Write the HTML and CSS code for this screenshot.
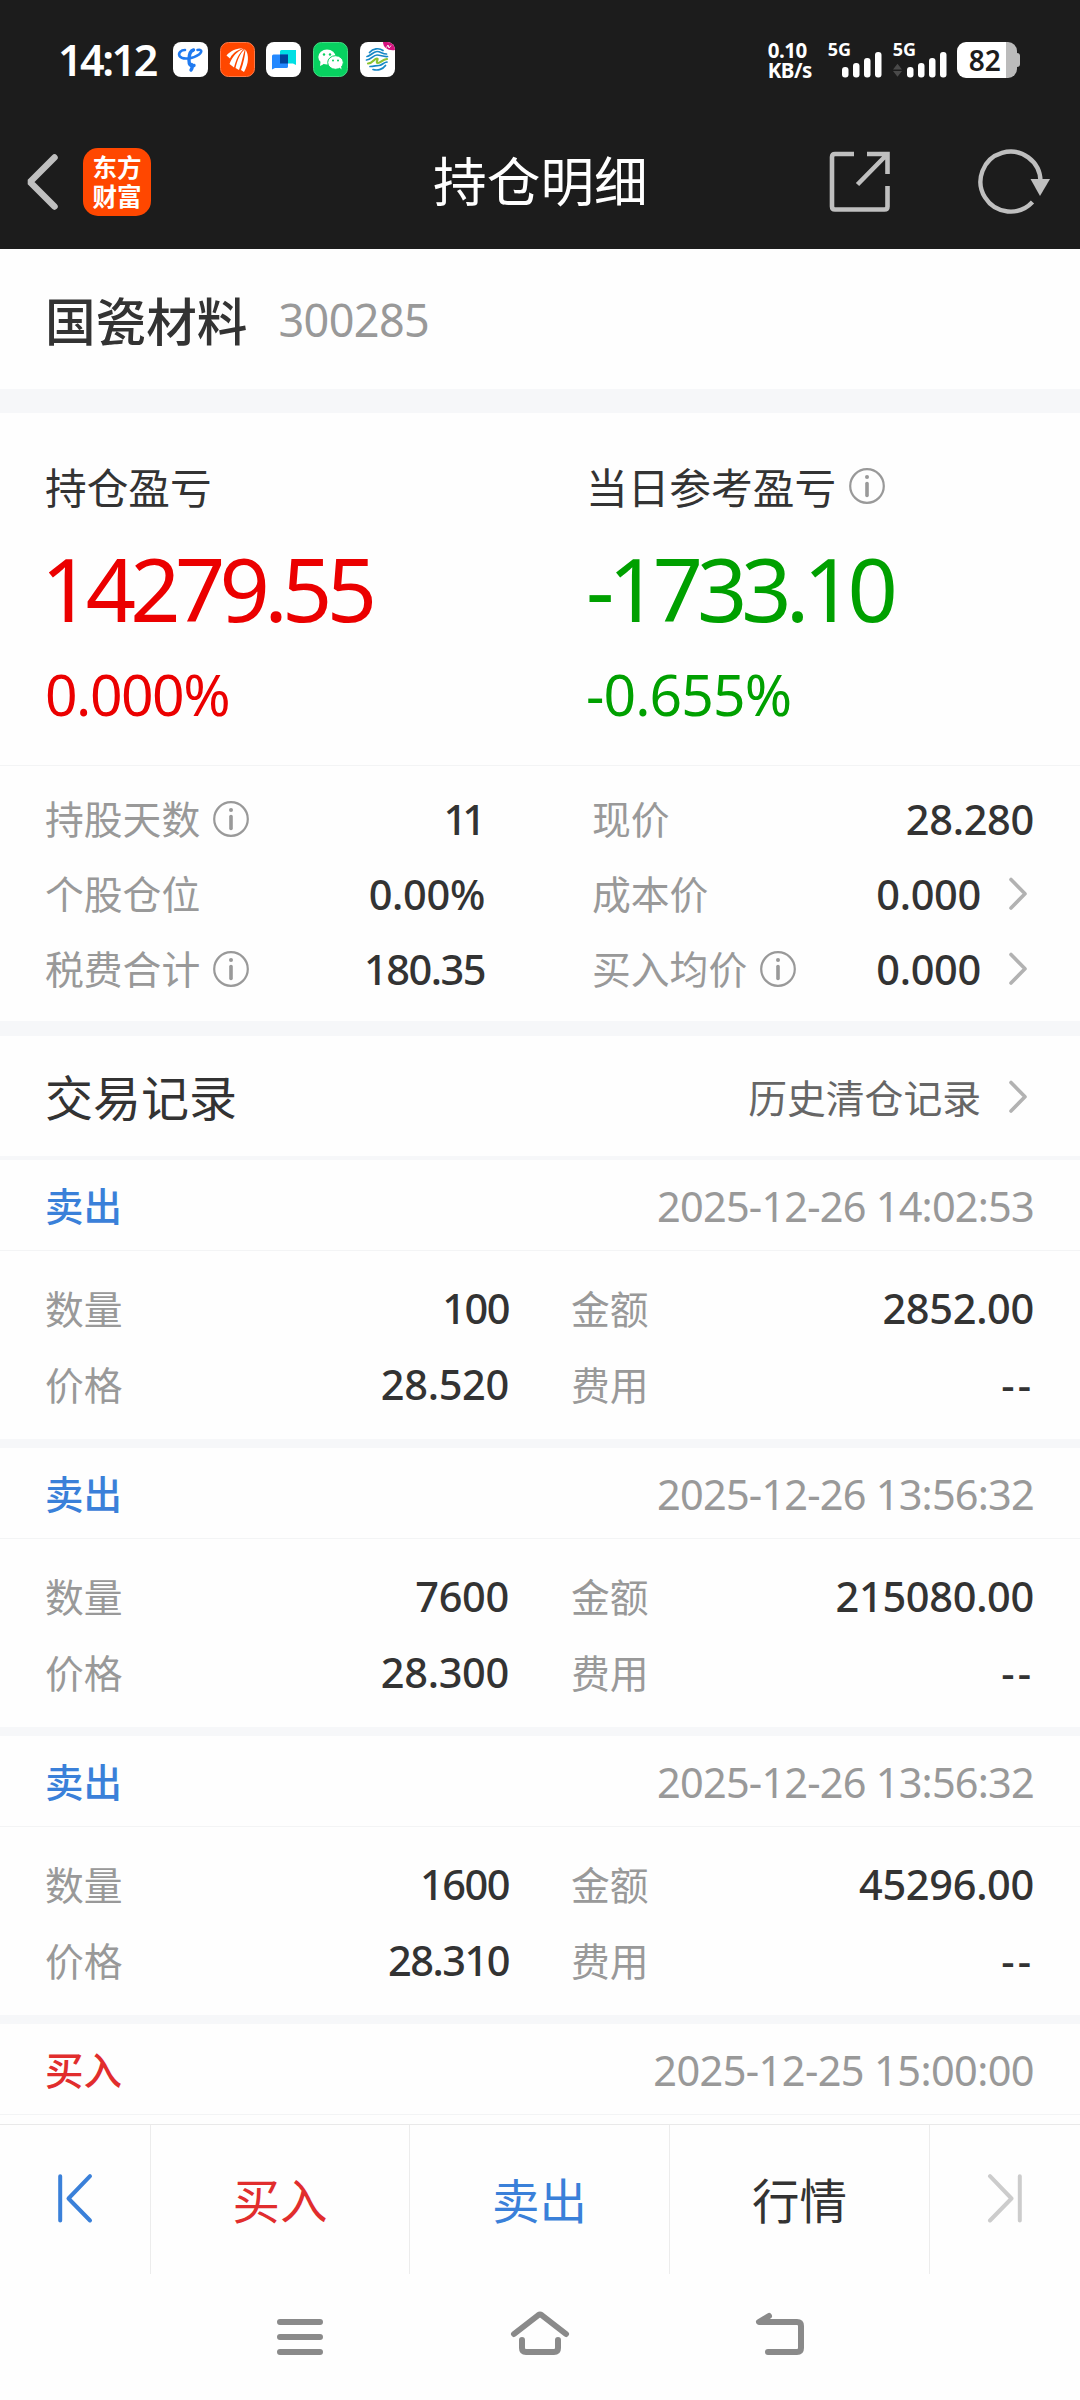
FILE: index.html
```html
<!DOCTYPE html>
<html lang="zh-CN">
<head>
    <meta charset="UTF-8">
    <meta name="viewport" content="width=device-width, initial-scale=1.0">
    <title>持仓明细</title>
    <link rel="stylesheet" href="styles.css">
</head>
<body>
    <svg class="defs">
        <symbol id="info" viewBox="0 0 36 36">
            <circle cx="18" cy="18" r="16.8" fill="none" stroke="#999" stroke-width="2.2"/>
            <circle cx="18" cy="9" r="2" fill="#999"/>
            <path d="M18 15.5V27.5" stroke="#999" stroke-width="3.6" stroke-linecap="round"/>
        </symbol>
        <symbol id="arrow" viewBox="0 0 20 34">
            <path d="M3 2.5L17 16.8L3 31" fill="none" stroke="#b2b2b2" stroke-width="3.6" stroke-linecap="round" stroke-linejoin="round"/>
        </symbol>
        <symbol id="bars" viewBox="0 0 40 26">
            <g fill="#fff">
                <rect x="0" y="15" width="6.5" height="10.5" rx="3"/>
                <rect x="11" y="11" width="6.5" height="14.5" rx="3"/>
                <rect x="22" y="6" width="6.5" height="19.5" rx="3"/>
                <rect x="33" y="0" width="6.5" height="25.5" rx="3"/>
            </g>
        </symbol>
    </svg>

    <header>
        <div class="status">
            <span class="time">14:12</span>
            <div class="apps">
                <svg viewBox="0 0 35 35">
                    <rect width="35" height="35" rx="8" fill="#fff"/>
                    <path d="M12 8C8 8 5 11 6.5 14C9 18 20 17 26 12.500C30 9 28 7 24.500 8" fill="none" stroke="#1f7af0" stroke-width="2.6" stroke-linecap="round"/>
                    <path d="M20.500 8C16.500 9 16 13 16 18C16 22.500 17 24.500 21 23.500M18.500 22.500Q20 26 18 28" fill="none" stroke="#1f7af0" stroke-width="3.4" stroke-linecap="round"/>
                </svg>
                <svg viewBox="0 0 35 35">
                    <rect x=".5" y=".5" width="34" height="34" rx="8" fill="#ff4700" stroke="#ff7a48"/>
                    <path d="M6.500 13.500C11 8 17 6 23 6.500C16 8.500 12 12 10 16.500Z" fill="#fff"/>
                    <path d="M9.500 22C12 15 17 9 24 6.800C19 11 16 18 14 25.500Z" fill="#fff"/>
                    <path d="M15.500 26C17.500 18 20 11 25 7C23 13 22 20 19 28Z" fill="#fff"/>
                    <path d="M21 28C23.500 21 25 14 25.500 7.500C29 13 29 21 24 30Z" fill="#fff"/>
                </svg>
                <svg viewBox="0 0 35 35">
                    <rect width="35" height="35" rx="8" fill="#fff"/>
                    <path d="M14 9.500Q14 8 15.500 8H30V23L27 21.500H14Z" fill="#00dfe4"/>
                    <path d="M6 14Q6 12.500 7.500 12.500H22V24.500Q22 26 20.500 26H9L6 27.500Z" fill="#2489ff"/>
                    <path d="M14 12.500H22V21.500H14Z" fill="#00439b"/>
                </svg>
                <svg viewBox="0 0 35 35">
                    <rect x=".5" y=".5" width="34" height="34" rx="8" fill="#07d160" stroke="#42dc83"/>
                    <path d="M7 24L7.500 20H12L10 22.500Z" fill="#fff"/>
                    <ellipse cx="14" cy="15" rx="8.700" ry="7.500" fill="#fff"/>
                    <ellipse cx="22.500" cy="20.500" rx="7.800" ry="6.800" fill="#fff" stroke="#07d160" stroke-width="1"/>
                    <path d="M26 25L28.500 27.500L28 23.500Z" fill="#fff"/>
                    <g fill="#07d160">
                        <circle cx="11" cy="12.500" r="1.200"/><circle cx="17" cy="12.500" r="1.200"/>
                        <circle cx="20" cy="18.500" r="1"/><circle cx="25" cy="18.500" r="1"/>
                    </g>
                </svg>
                <svg viewBox="0 0 35 35">
                    <rect width="35" height="35" rx="8" fill="#fff"/>
                    <path d="M23 0H27A8 8 0 0 1 35 8C29 9 23 6 23 0Z" fill="#d6127f"/>
                    <path d="M26.500 5.500L28 3L29 6L31 3.500" fill="none" stroke="#fff" stroke-width=".9"/>
                    <g fill="none" stroke-width="1.700" stroke-linecap="round">
                        <path d="M9.500 10.500C13 6.500 19 5.500 23 8.500" stroke="#1587c6"/>
                        <path d="M7 14.500C10 14.500 13 9.500 17 9.500C21 9.500 22 12 26.500 12" stroke="#1587c6"/>
                        <path d="M6.500 18C11 18 13 13 17 13C21 13 23 15 27.500 14.500" stroke="#1587c6"/>
                        <path d="M8 21.500C13 21.500 14 16.500 17 16.500C19 16.500 15 21 18 21C21 21 22 17.500 27 17" stroke="#8bc334" stroke-width="2.200"/>
                        <path d="M10 24.500C14 24.500 16 23.500 19 23.500C22 23.500 23 20.500 27 20" stroke="#1587c6"/>
                        <path d="M13 27.500C18 29 23 27 25.500 23.500" stroke="#1587c6"/>
                    </g>
                </svg>
            </div>
            <div class="speed"><span>0.10</span><span>KB/s</span></div>
            <div class="signal">
                <span class="net">5G</span>
                <svg class="bars"><use href="#bars"/></svg>
            </div>
            <div class="signal">
                <span class="net">5G</span>
                <svg class="updown" viewBox="0 0 10 15"><path d="M0 6.500L5 0L10 6.500ZM0 8H10L5 14.500Z" fill="#4a4a4a"/></svg>
                <svg class="bars"><use href="#bars"/></svg>
            </div>
            <div class="battery">82</div>
        </div>

        <div class="navbar">
            <svg class="back" viewBox="0 0 32 56"><path d="M28.500 3.500L4 28L28.500 52.500" fill="none" stroke="#bfbfbf" stroke-width="6.500" stroke-linecap="round" stroke-linejoin="bevel"/></svg>
            <div class="logo"><span>东方</span><span>财富</span></div>
            <h1>持仓明细</h1>
            <svg class="share" viewBox="0 0 62 62">
                <path d="M25 3H6Q3 3 3 6V55.500Q3 58.500 6 58.500H55.500Q58.500 58.500 58.500 55.500V35M38 3H58.500V23M57 4.500L28.500 33.500" fill="none" stroke="#bfbfbf" stroke-width="4.600"/>
            </svg>
            <svg class="reload" viewBox="0 0 72 64">
                <path d="M61.500 31A30 30 0 1 0 53.500 52" fill="none" stroke="#bfbfbf" stroke-width="4.400"/>
                <path d="M51.500 29H71L61 46Z" fill="#bfbfbf"/>
            </svg>
        </div>
    </header>

    <main>
        <section class="stock">
            <span class="name">国瓷材料</span>
            <span class="code">300285</span>
        </section>

        <section class="profit">
            <div class="red">
                <h2>持仓盈亏</h2>
                <p class="amount total">14279.55</p>
                <p class="rate">0.000%</p>
            </div>
            <div class="green">
                <h2>当日参考盈亏<svg class="info"><use href="#info"/></svg></h2>
                <p class="amount">-1733.10</p>
                <p class="rate day">-0.655%</p>
            </div>
        </section>

        <section class="detail">
            <div class="item"><label>持股天数</label><svg class="info"><use href="#info"/></svg><b class="ones">11</b></div>
            <div class="item"><label>现价</label><b>28.280</b></div>
            <div class="item"><label>个股仓位</label><b>0.00%</b></div>
            <div class="item"><label>成本价</label><b>0.000</b><svg class="arrow"><use href="#arrow"/></svg></div>
            <div class="item"><label>税费合计</label><svg class="info"><use href="#info"/></svg><b class="tight">180.35</b></div>
            <div class="item"><label>买入均价</label><svg class="info"><use href="#info"/></svg><b>0.000</b><svg class="arrow"><use href="#arrow"/></svg></div>
        </section>

        <section class="history">
            <h3>交易记录</h3>
            <a>历史清仓记录</a>
            <svg class="arrow"><use href="#arrow"/></svg>
        </section>

        <section class="record">
            <div class="record-head"><span class="sell">卖出</span><time>2025-12-26 14:02:53</time></div>
            <div class="record-body">
                <div class="item"><label>数量</label><b class="tight">100</b></div>
                <div class="item"><label>金额</label><b>2852.00</b></div>
                <div class="item"><label>价格</label><b>28.520</b></div>
                <div class="item"><label>费用</label><b class="none">--</b></div>
            </div>
        </section>
        <section class="record">
            <div class="record-head"><span class="sell">卖出</span><time>2025-12-26 13:56:32</time></div>
            <div class="record-body">
                <div class="item"><label>数量</label><b>7600</b></div>
                <div class="item"><label>金额</label><b>215080.00</b></div>
                <div class="item"><label>价格</label><b>28.300</b></div>
                <div class="item"><label>费用</label><b class="none">--</b></div>
            </div>
        </section>
        <section class="record">
            <div class="record-head"><span class="sell">卖出</span><time>2025-12-26 13:56:32</time></div>
            <div class="record-body">
                <div class="item"><label>数量</label><b class="tight">1600</b></div>
                <div class="item"><label>金额</label><b>45296.00</b></div>
                <div class="item"><label>价格</label><b class="tight">28.310</b></div>
                <div class="item"><label>费用</label><b class="none">--</b></div>
            </div>
        </section>
        <section class="record last">
            <div class="record-head"><span class="buy">买入</span><time class="wide">2025-12-25 15:00:00</time></div>
        </section>
    </main>

    <footer>
        <nav class="tabs">
            <div><svg viewBox="0 0 34 49"><path d="M2.200 2.200V46.500M32 2.200L10.500 24.500L32 46.500" fill="none" stroke="#3a80d9" stroke-width="4" stroke-linecap="round" stroke-linejoin="round"/></svg></div>
            <div class="buy">买入</div>
            <div class="sell">卖出</div>
            <div>行情</div>
            <div><svg viewBox="0 0 34 49"><path d="M31.800 2.200V46.500M2 2.200L23.500 24.500L2 46.500" fill="none" stroke="#ccc" stroke-width="4" stroke-linecap="round" stroke-linejoin="round"/></svg></div>
        </nav>
        <div class="system">
            <svg viewBox="0 0 60 50"><path d="M10 12H50M10 27H50M10 42H50"/></svg>
            <svg viewBox="0 0 60 50"><path d="M4 24L28.500 5Q30 4 31.500 5L56 24M12 30V38Q12 42 16 42H44Q48 42 48 38V30"/></svg>
            <svg viewBox="0 0 60 50"><path d="M19 6L9 12H47Q51 12 51 16V38Q51 42 47 42H18"/></svg>
        </div>
    </footer>
</body>
</html>
```
FILE: styles.css
```css
* {
    box-sizing: border-box;
    margin: 0;
    padding: 0;
}

body {
    width: 1080px;
    height: 2400px;
    overflow: hidden;
    display: flex;
    flex-direction: column;
    background-color: #fefefe;
    color: #333;
    font-family: "Noto Sans", "Noto Sans CJK SC", sans-serif;
}

.defs {
    display: none;
}

svg {
    display: block;
    flex-shrink: 0;
    overflow: visible;
}

header {
    height: 249px;
    background-color: #1c1c1c;
    color: #fff;
}

/* status bar */
.status {
    display: flex;
    align-items: center;
    height: 119px;
    padding-left: 58px;
}

.time {
    width: 115px;
    font-size: 43px;
    font-weight: 600;
    line-height: 60px;
    letter-spacing: -2.5px;
}

.apps {
    display: flex;
    gap: 11.7px;
}

.apps svg {
    width: 35px;
    height: 35px;
}

.speed {
    display: flex;
    flex-direction: column;
    width: 60px;
    margin-left: 373px;
    font-size: 20.5px;
    font-weight: 700;
    line-height: 20px;
    letter-spacing: -0.5px;
    white-space: nowrap;
}

.signal {
    display: flex;
    width: 65px;
    height: 36px;
    align-items: flex-end;
}

.signal .net {
    width: 14px;
    align-self: flex-start;
    font-size: 18px;
    font-weight: 700;
    line-height: 15px;
}

.signal .bars {
    width: 40px;
    height: 26px;
}

.signal .updown {
    width: 9px;
    height: 15px;
    margin: 0 5px 0 -14px;
}

.battery {
    position: relative;
    width: 60px;
    height: 36px;
    border-radius: 9px;
    background: linear-gradient(to right, #fff 49px, #bbb 49px);
    color: #1c1c1c;
    font-size: 28px;
    font-weight: 600;
    line-height: 36px;
    padding-left: 12px;
    margin-left: -1px;
}

.battery::after {
    content: "";
    position: absolute;
    right: -3px;
    top: 11px;
    width: 4px;
    height: 14px;
    border-radius: 0 3px 3px 0;
    background-color: #bbb;
}

.navbar {
    display: flex;
    align-items: center;
    height: 125px;
    padding-left: 26px;
}

.back {
    width: 32px;
    height: 56px;
}

.logo {
    display: flex;
    flex-direction: column;
    align-items: center;
    width: 68px;
    height: 68px;
    margin-left: 25px;
    padding-top: 4px;
    border-radius: 15px;
    background-color: #ff4700;
    font-size: 24.5px;
    font-weight: 700;
    line-height: 29px;
    font-family: "Noto Sans CJK SC", sans-serif;
}

h1 {
    width: 396px;
    margin-left: 282px;
    font-size: 53.7px;
    font-weight: 400;
    line-height: 80px;
}

.share {
    width: 62px;
    height: 62px;
}

.reload {
    width: 72px;
    height: 64px;
    margin-left: 88px;
}

.stock {
    display: flex;
    align-items: center;
    height: 164px;
    padding-left: 45px;
    border-bottom: 24px solid #f6f7f9;
}

.stock .name {
    font-size: 50.6px;
    font-weight: 500;
}

.stock .code {
    margin-left: 31px;
    color: #999;
    font-size: 45px;
    letter-spacing: -0.6px;
}

.profit {
    display: grid;
    grid-template-columns: 541px 1fr;
    height: 353px;
    padding: 48px 0 0 45px;
    border-bottom: 1px solid #f3f4f5;
}

.profit h2 {
    display: flex;
    align-items: center;
    height: 50px;
    color: #333;
    font-size: 41.7px;
    font-weight: 400;
}

.info {
    width: 36px;
    height: 36px;
    margin-left: 13px;
}

.amount {
    height: 154px;
    font-size: 88px;
    line-height: 154px;
    letter-spacing: -6px;
}

.amount.total {
    margin-left: -4px;
    letter-spacing: -5.7px;
}

.rate {
    font-size: 57px;
    line-height: 58px;
    letter-spacing: -1.5px;
}

.rate.day {
    letter-spacing: -0.9px;
}

.red {
    color: #eb0000;
}

.green {
    color: #00a000;
}

.detail {
    display: grid;
    grid-template-columns: 440px 442px;
    grid-auto-rows: 75px;
    column-gap: 107px;
    height: 270px;
    padding: 15px 0 0 45px;
    border-bottom: 15px solid #f6f7f9;
}

.item {
    display: flex;
    align-items: center;
}

.item label {
    padding-bottom: 3px;
    color: #999;
    font-size: 38.8px;
}

.item b {
    margin-left: auto;
    font-size: 41.5px;
    font-weight: 500;
    letter-spacing: -0.3px;
}

.item b.tight {
    letter-spacing: -1.5px;
}

.item b.ones {
    letter-spacing: -5px;
    padding-right: 4px;
}

.item b.none {
    letter-spacing: 3px;
}

.arrow {
    width: 20px;
    height: 34px;
    margin: 0 6px 0 27px;
}

.history {
    display: flex;
    align-items: center;
    height: 124px;
    padding: 0 46px 0 45px;
    border-bottom: 4px solid #f6f7f9;
}

.history h3 {
    padding-bottom: 3px;
    font-size: 48px;
    font-weight: 400;
}

.history a {
    margin-left: auto;
    color: #666;
    font-size: 38.8px;
}

.history .arrow {
    margin-top: 2px;
}

.record {
    height: 288px;
    border-bottom: 9px solid #f6f7f9;
}

.record-head {
    display: flex;
    justify-content: space-between;
    align-items: center;
    height: 91px;
    padding: 1px 46px 0 45px;
    border-bottom: 1px solid #f3f4f5;
    font-size: 38.5px;
    font-weight: 500;
}

.record-head span {
    padding-bottom: 3px;
}

.record-head time {
    color: #999;
    font-size: 41.5px;
    font-weight: 400;
    letter-spacing: -0.8px;
}

.record-head time.wide {
    letter-spacing: -0.6px;
}

.record-body {
    display: grid;
    grid-template-columns: 464px 463px;
    grid-auto-rows: 76px;
    column-gap: 62px;
    padding: 19px 0 0 45px;
}

.record.last {
    height: 100px;
    border: none;
}

.sell {
    color: #3a80d9;
}

.buy {
    color: #e12d2d;
}

.tabs {
    display: grid;
    grid-template-columns: 151px 259px 260px 260px 150px;
    height: 150px;
    border-top: 1px solid #e9e9e9;
}

.tabs div {
    display: flex;
    align-items: center;
    justify-content: center;
    padding-bottom: 2px;
    border-right: 1px solid #ececec;
    font-size: 47.5px;
}

.tabs div:last-child {
    border-right: none;
}

.tabs svg {
    width: 34px;
    height: 49px;
}

.system {
    display: flex;
    justify-content: space-between;
    padding: 36px 270px 0;
}

.system svg {
    width: 60px;
    height: 50px;
    fill: none;
    stroke: #8a8a8a;
    stroke-width: 6;
    stroke-linecap: round;
    stroke-linejoin: round;
}
```
